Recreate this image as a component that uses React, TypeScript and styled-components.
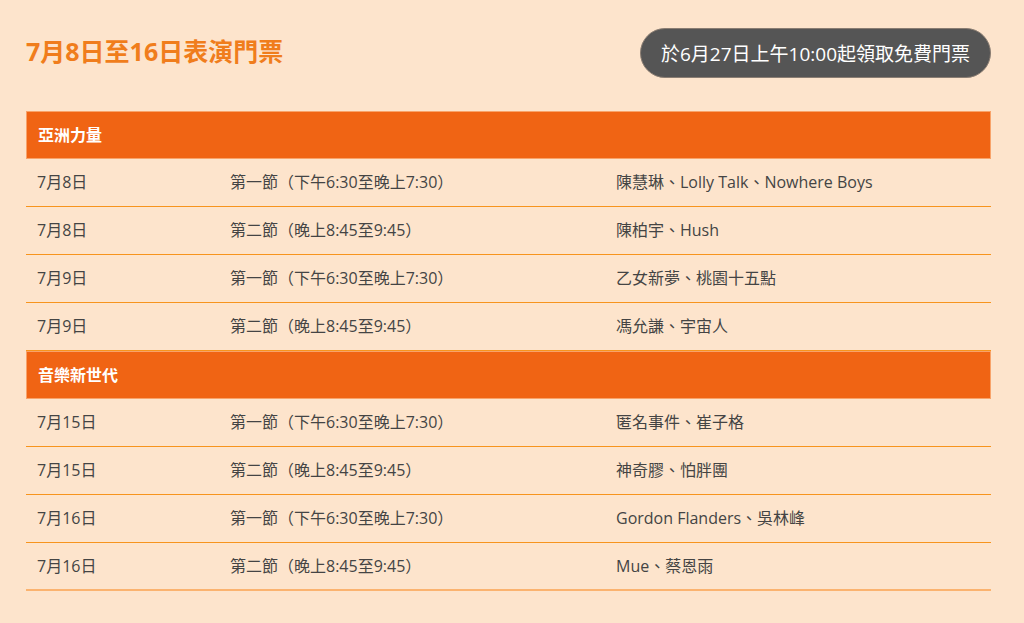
import styled, { createGlobalStyle } from 'styled-components';

const GlobalStyle = createGlobalStyle`
  html, body {
    margin: 0;
    padding: 0;
    background: #fde4cc;
  }
  body {
    font-family: 'Open Sans', 'Noto Sans CJK TC', sans-serif;
    color: #444;
  }
`;

const Page = styled.div`
  width: 1024px;
  height: 623px;
  box-sizing: border-box;
  padding: 28px 33px 0 26px;
  background: #fde4cc;
`;

const TopBar = styled.div`
  display: flex;
  justify-content: space-between;
  align-items: center;
  height: 50px;
  margin-bottom: 33px;
`;

const Title = styled.h2`
  margin: 0 0 6px;
  font-size: 25px;
  font-weight: 700;
  color: #f07d1c;
`;

const Pill = styled.div`
  height: 50px;
  padding: 0 20px;
  display: flex;
  align-items: center;
  border-radius: 25px;
  background: #555555;
  border: 1px solid #8a7d72;
  box-sizing: border-box;
  color: #fff;
  font-size: 19px;
`;

const Table = styled.div`
  width: 965px;
`;

const GroupHeader = styled.div`
  height: 48px;
  box-sizing: border-box;
  display: flex;
  align-items: center;
  padding: 0 11px 2px;
  background: #f06414;
  border: 1px solid #f8a36a;
  color: #fff;
  font-size: 16px;
  font-weight: 700;
`;

const Row = styled.div<{ $last?: boolean }>`
  display: grid;
  grid-template-columns: 193px 386px 386px;
  height: 48px;
  box-sizing: border-box;
  align-items: center;
  padding-bottom: 3px;
  border-bottom: ${(p) => (p.$last ? '2px solid #fbb36f' : '1px solid #f7941d')};
`;

const Cell = styled.div`
  padding: 0 11px;
  font-size: 16px;
  color: #444;
  white-space: nowrap;
`;

type Show = { date: string; slot: string; acts: string };

const groups: { name: string; shows: Show[] }[] = [
  {
    name: '亞洲力量',
    shows: [
      { date: '7月8日', slot: '第一節（下午6:30至晚上7:30）', acts: '陳慧琳、Lolly Talk、Nowhere Boys' },
      { date: '7月8日', slot: '第二節（晚上8:45至9:45）', acts: '陳柏宇、Hush' },
      { date: '7月9日', slot: '第一節（下午6:30至晚上7:30）', acts: '乙女新夢、桃園十五點' },
      { date: '7月9日', slot: '第二節（晚上8:45至9:45）', acts: '馮允謙、宇宙人' },
    ],
  },
  {
    name: '音樂新世代',
    shows: [
      { date: '7月15日', slot: '第一節（下午6:30至晚上7:30）', acts: '匿名事件、崔子格' },
      { date: '7月15日', slot: '第二節（晚上8:45至9:45）', acts: '神奇膠、怕胖團' },
      { date: '7月16日', slot: '第一節（下午6:30至晚上7:30）', acts: 'Gordon Flanders、吳林峰' },
      { date: '7月16日', slot: '第二節（晚上8:45至9:45）', acts: 'Mue、蔡恩雨' },
    ],
  },
];

const App = () => {
  return (
    <>
      <GlobalStyle />
      <Page>
        <TopBar>
          <Title>7月8日至16日表演門票</Title>
          <Pill>於6月27日上午10:00起領取免費門票</Pill>
        </TopBar>
        <Table>
          {groups.map((group, gi) => (
            <div key={group.name}>
              <GroupHeader>{group.name}</GroupHeader>
              {group.shows.map((show, si) => (
                <Row
                  key={si}
                  $last={gi === groups.length - 1 && si === group.shows.length - 1}
                >
                  <Cell>{show.date}</Cell>
                  <Cell>{show.slot}</Cell>
                  <Cell>{show.acts}</Cell>
                </Row>
              ))}
            </div>
          ))}
        </Table>
      </Page>
    </>
  );
};

export default App;
